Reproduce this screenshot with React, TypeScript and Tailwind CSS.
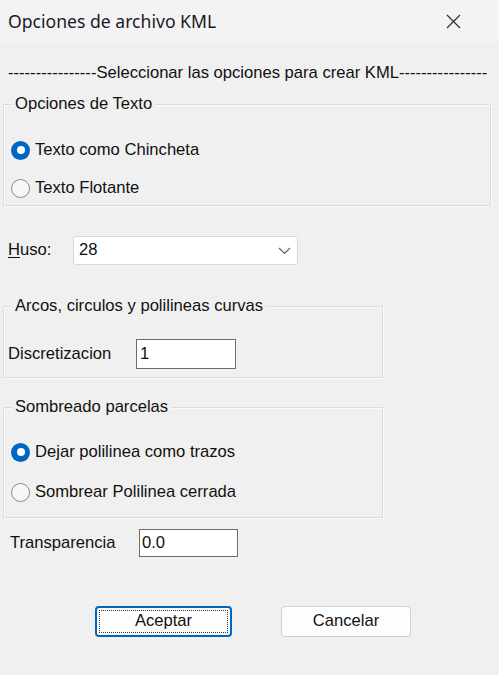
import React from 'react';

const Radio: React.FC<{ checked?: boolean; label: string }> = ({ checked, label }) => (
  <div className="flex items-center h-5 pl-[7px] gap-[5px]">
    {checked ? (
      <span className="w-[19px] h-[19px] rounded-full bg-[#0067c0] flex items-center justify-center">
        <span className="w-[8px] h-[8px] rounded-full bg-white" />
      </span>
    ) : (
      <span className="w-[19px] h-[19px] rounded-full border border-[#8a8a8a] bg-[#f7f7f7]" />
    )}
    <span>{label}</span>
  </div>
);

const Group: React.FC<{ title: string; className: string; children: React.ReactNode }> = ({ title, className, children }) => (
  <div className={`relative border border-[#dcdcdc] shadow-[inset_1px_1px_0_#fafafa,1px_1px_0_#fafafa] ${className}`}>
    <span className="absolute left-[8px] -top-[11px] bg-[#f0f0f0] px-[3px] leading-[20px]">{title}</span>
    {children}
  </div>
);

export default function App() {
  return (
    <div className="w-[499px] h-[675px] bg-[#f0f0f0] text-[16.6px] text-[#111] font-['Liberation_Sans',Arial,sans-serif] flex flex-col">
      {/* Title bar */}
      <div className="h-[42px] bg-[#f3f3f6] flex items-center justify-between pl-[8px] pr-[38px] shrink-0">
        <span className="font-['Noto_Sans',sans-serif] text-[17.6px] text-[#1a1a1a]">Opciones de archivo KML</span>
        <svg width="15" height="15" viewBox="0 0 15 15" className="text-[#333]">
          <path d="M1 1 L14 14 M14 1 L1 14" stroke="currentColor" strokeWidth="1.3" fill="none" />
        </svg>
      </div>

      <div className="flex flex-col px-[3px]">
        <div className="mt-[22px] h-[18px] leading-[18px] pl-[5px] whitespace-nowrap">
          ----------------Seleccionar las opciones para crear KML----------------
        </div>

        <Group title="Opciones de Texto" className="mt-[22px] w-[488px] h-[102px] pt-[35px] flex flex-col gap-[18px]">
          <Radio checked label="Texto como Chincheta" />
          <Radio label="Texto Flotante" />
        </Group>

        <div className="mt-[30px] flex items-center pl-[5px]">
          <span className="w-[65px]">
            <span className="underline underline-offset-2">H</span>uso:
          </span>
          <div className="w-[225px] h-[29px] bg-white border border-[#d9d9d9] rounded-[3px] flex items-center justify-between pl-[5px] pr-[6px]">
            <span>28</span>
            <svg width="13" height="8" viewBox="0 0 13 8">
              <path d="M1 1 L6.5 6.5 L12 1" stroke="#606060" strokeWidth="1.2" fill="none" />
            </svg>
          </div>
        </div>

        <Group title="Arcos, circulos y polilineas curvas" className="mt-[41px] w-[380px] h-[72px] pt-[32px]">
          <div className="flex items-center pl-[4px]">
            <span className="w-[128px]">Discretizacion</span>
            <div className="w-[100px] h-[30px] bg-white border border-[#6e6e6e] flex items-center pl-[3px]">1</div>
          </div>
        </Group>

        <Group title="Sombreado parcelas" className="mt-[29px] w-[380px] h-[111px] pt-[34px] flex flex-col gap-[20px]">
          <Radio checked label="Dejar polilinea como trazos" />
          <Radio label="Sombrear Polilinea cerrada" />
        </Group>

        <div className="mt-[11px] flex items-center pl-[7px]">
          <span className="w-[129px]">Transparencia</span>
          <div className="w-[99px] h-[28px] bg-white border border-[#6e6e6e] flex items-center pl-[2px]">0.0</div>
        </div>

        <div className="mt-[49px] flex pl-[92px] gap-[49px]">
          <button className="w-[137px] h-[31px] bg-[#fdfdfd] border-2 border-[#0067c0] rounded-[4px] p-[2px]">
            <span className="w-full h-full border border-dotted border-[#333] flex items-center justify-center">Aceptar</span>
          </button>
          <button className="w-[130px] h-[31px] bg-[#fdfdfd] border border-[#d0d0d0] rounded-[4px] flex items-center justify-center">
            Cancelar
          </button>
        </div>
      </div>
    </div>
  );
}
